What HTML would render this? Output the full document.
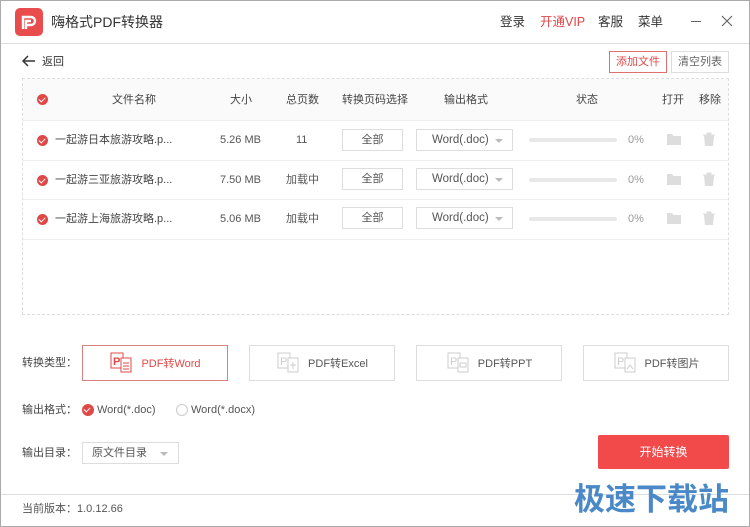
<!DOCTYPE html>
<html><head><meta charset="utf-8"><style>
*{margin:0;padding:0;box-sizing:border-box}
body{width:750px;height:527px;background:#fff;font-family:"Liberation Sans","Noto Sans CJK SC",sans-serif;color:#333;position:relative;overflow:hidden;font-size:12px}
.a{position:absolute}
.win{left:0;top:0;width:750px;height:527px;border:1px solid #aaa}
.hl{height:1px;background:#ddd;left:1px;width:748px}
.chk{width:11px;height:11px;border-radius:50%;background:#e04848}
.chk:after{content:"";position:absolute;left:3px;top:2px;width:3px;height:5px;border:solid #fff;border-width:0 1.5px 1.5px 0;transform:rotate(45deg)}
.t{font-size:11px;color:#444;line-height:14px}
.box{border:1px solid #ddd;background:#fff}
.bar{height:4px;background:#e8e8e8;border-radius:2px}
.ct{border:1px solid #ddd;height:36px;width:146px;top:345px;font-size:11px;color:#555;display:flex;align-items:center;justify-content:center;gap:8px}
</style></head><body>
<div class="a win"></div>
<svg class="a" style="left:15px;top:8px" width="28" height="28" viewBox="0 0 28 28"><rect width="28" height="28" rx="5" fill="#e94c4c"/><path d="M8 21V9h8a4 4 0 0 1 0 8h-5M11 21v-8h5" stroke="#fff" stroke-width="2.4" fill="none"/></svg>
<div class="a" style="left:51px;top:13px;font-size:14px;color:#333;line-height:18px">嗨格式PDF转换器</div>
<div class="a" style="left:500px;top:14px;font-size:12.5px;color:#333;line-height:16px">登录</div>
<div class="a" style="left:540px;top:14px;font-size:12.5px;color:#e04848;line-height:16px">开通VIP</div>
<div class="a" style="left:598px;top:14px;font-size:12.5px;color:#333;line-height:16px">客服</div>
<div class="a" style="left:638px;top:14px;font-size:12.5px;color:#333;line-height:16px">菜单</div>
<div class="a" style="left:691px;top:21px;width:10px;height:1px;background:#666"></div>
<svg class="a" style="left:721px;top:15px" width="12" height="12"><path d="M1 1L11 11M11 1L1 11" stroke="#666" stroke-width="1.2"/></svg>
<div class="a hl" style="top:43px"></div>
<svg class="a" style="left:22px;top:55px" width="14" height="12"><path d="M13 6H2M6 1L1 6l5 5" stroke="#333" stroke-width="1.5" fill="none"/></svg>
<div class="a t" style="left:42px;top:55px;color:#333">返回</div>
<div class="a" style="left:609px;top:51px;width:58px;height:22px;border:1px solid #e07070;color:#e04848;font-size:11px;text-align:center;line-height:20px">添加文件</div>
<div class="a" style="left:671px;top:51px;width:58px;height:22px;border:1px solid #ddd;color:#666;font-size:11px;text-align:center;line-height:20px">清空列表</div>
<div class="a" style="left:22px;top:78px;width:707px;height:237px;border:1px dashed #ddd"></div>
<div class="a" style="left:23px;top:79px;width:705px;height:41px;background:#fafafa"></div>
<div class="a chk" style="left:37px;top:94px"></div>
<div class="a t" style="left:112px;top:93px">文件名称</div>
<div class="a t" style="left:230px;top:93px">大小</div>
<div class="a t" style="left:286px;top:93px">总页数</div>
<div class="a t" style="left:342px;top:93px">转换页码选择</div>
<div class="a t" style="left:444px;top:93px">输出格式</div>
<div class="a t" style="left:576px;top:93px">状态</div>
<div class="a t" style="left:662px;top:93px">打开</div>
<div class="a t" style="left:699px;top:93px">移除</div>
<div class="a hl" style="left:23px;width:705px;top:120px;background:#eee"></div>
<div class="a hl" style="left:23px;width:705px;top:160px;background:#eee"></div>
<div class="a hl" style="left:23px;width:705px;top:199px;background:#eee"></div>
<div class="a hl" style="left:23px;width:705px;top:239px;background:#eee"></div>

<div class="a chk" style="left:37px;top:135px"></div><div class="a t" style="left:55px;top:133px">一起游日本旅游攻略.p...</div><div class="a t" style="left:220px;top:133px;color:#555">5.26 MB</div><div class="a t" style="left:296px;top:133px;color:#555">11</div>
<div class="a chk" style="left:37px;top:175px"></div><div class="a t" style="left:55px;top:173px">一起游三亚旅游攻略.p...</div><div class="a t" style="left:220px;top:173px;color:#555">7.50 MB</div><div class="a t" style="left:286px;top:173px;color:#555">加载中</div>
<div class="a chk" style="left:37px;top:214px"></div><div class="a t" style="left:55px;top:212px">一起游上海旅游攻略.p...</div><div class="a t" style="left:220px;top:212px;color:#555">5.06 MB</div><div class="a t" style="left:286px;top:212px;color:#555">加载中</div>

<div class="a box" style="left:342px;top:129px;width:61px;height:22px;font-size:11px;text-align:center;line-height:20px;color:#555">全部</div>
<div class="a box" style="left:342px;top:168px;width:61px;height:22px;font-size:11px;text-align:center;line-height:20px;color:#555">全部</div>
<div class="a box" style="left:342px;top:207px;width:61px;height:22px;font-size:11px;text-align:center;line-height:20px;color:#555">全部</div>
<div class="a box" style="left:416px;top:129px;width:97px;height:22px;font-size:11.5px;line-height:20px;padding-left:15px;color:#555">Word(.doc)<span class="a" style="right:9px;top:9px;border:4px solid transparent;border-top-color:#bbb"></span></div>
<div class="a box" style="left:416px;top:168px;width:97px;height:22px;font-size:11.5px;line-height:20px;padding-left:15px;color:#555">Word(.doc)<span class="a" style="right:9px;top:9px;border:4px solid transparent;border-top-color:#bbb"></span></div>
<div class="a box" style="left:416px;top:207px;width:97px;height:22px;font-size:11.5px;line-height:20px;padding-left:15px;color:#555">Word(.doc)<span class="a" style="right:9px;top:9px;border:4px solid transparent;border-top-color:#bbb"></span></div>
<div class="a bar" style="left:529px;top:138px;width:88px"></div><div class="a bar" style="left:529px;top:178px;width:88px"></div><div class="a bar" style="left:529px;top:217px;width:88px"></div>
<div class="a t" style="left:628px;top:133px;color:#999">0%</div><div class="a t" style="left:628px;top:173px;color:#999">0%</div><div class="a t" style="left:628px;top:212px;color:#999">0%</div>
<svg class="a" style="left:667px;top:133px" width="14" height="12"><path d="M0 1h5l1.5 2H14v9H0z" fill="#ddd"/></svg>
<svg class="a" style="left:667px;top:173px" width="14" height="12"><path d="M0 1h5l1.5 2H14v9H0z" fill="#ddd"/></svg>
<svg class="a" style="left:667px;top:212px" width="14" height="12"><path d="M0 1h5l1.5 2H14v9H0z" fill="#ddd"/></svg>
<svg class="a" style="left:703px;top:132px" width="12" height="14"><path d="M0 3h12M4 3V1h4v2M1.5 4h9l-1 10h-7z" fill="#ddd" stroke="#ddd"/></svg>
<svg class="a" style="left:703px;top:172px" width="12" height="14"><path d="M0 3h12M4 3V1h4v2M1.5 4h9l-1 10h-7z" fill="#ddd" stroke="#ddd"/></svg>
<svg class="a" style="left:703px;top:211px" width="12" height="14"><path d="M0 3h12M4 3V1h4v2M1.5 4h9l-1 10h-7z" fill="#ddd" stroke="#ddd"/></svg>

<div class="a t" style="left:22px;top:356px">转换类型：</div>
<div class="a ct" style="left:82px;border-color:#d98080;color:#e04848"><svg width="24" height="24"><rect x="2" y="2" width="12" height="15" fill="#fff" stroke="#e04848"/><text x="4" y="14" font-size="11" font-weight="bold" fill="#e04848" font-family="Liberation Sans">P</text><rect x="12" y="7" width="10" height="14" fill="#fff" stroke="#e04848"/><path d="M14 12h6M14 15h6M14 18h6" stroke="#e04848"/></svg>PDF转Word</div>
<div class="a ct" style="left:249px"><svg width="24" height="24"><rect x="2" y="2" width="12" height="15" fill="#fff" stroke="#ccc"/><text x="4" y="14" font-size="11" fill="#ccc" font-family="Liberation Sans">P</text><rect x="12" y="7" width="10" height="14" fill="#fff" stroke="#ccc"/><path d="M14 14h6M17 11v7" stroke="#ccc"/></svg>PDF转Excel</div>
<div class="a ct" style="left:416px"><svg width="24" height="24"><rect x="2" y="2" width="12" height="15" fill="#fff" stroke="#ccc"/><text x="4" y="14" font-size="11" fill="#ccc" font-family="Liberation Sans">P</text><rect x="12" y="7" width="10" height="14" fill="#fff" stroke="#ccc"/><rect x="14" y="12" width="6" height="4" fill="none" stroke="#ccc"/></svg>PDF转PPT</div>
<div class="a ct" style="left:583px"><svg width="24" height="24"><rect x="2" y="2" width="12" height="15" fill="#fff" stroke="#ccc"/><text x="4" y="14" font-size="11" fill="#ccc" font-family="Liberation Sans">P</text><rect x="12" y="7" width="10" height="14" fill="#fff" stroke="#ccc"/><path d="M14 18l3-4 3 4" stroke="#ccc" fill="none"/></svg>PDF转图片</div>

<div class="a t" style="left:22px;top:403px">输出格式：</div>
<div class="a chk" style="left:82px;top:404px;width:12px;height:12px"></div>
<div class="a t" style="left:97px;top:403px;color:#555">Word(*.doc)</div>
<div class="a" style="left:176px;top:404px;width:12px;height:12px;border:1px solid #ccc;border-radius:50%"></div>
<div class="a t" style="left:191px;top:403px;color:#555">Word(*.docx)</div>

<div class="a t" style="left:22px;top:446px">输出目录：</div>
<div class="a box" style="left:82px;top:442px;width:97px;height:22px;font-size:11px;line-height:20px;padding-left:9px;color:#555">原文件目录<span class="a" style="right:10px;top:9px;border:4px solid transparent;border-top-color:#bbb"></span></div>

<div class="a" style="left:598px;top:435px;width:131px;height:34px;background:#f24a4a;border-radius:2px;color:#fff;font-size:12px;text-align:center;line-height:34px">开始转换</div>
<div class="a hl" style="top:494px"></div>
<div class="a t" style="left:22px;top:502px;color:#555">当前版本：1.0.12.66</div>
<div class="a" style="left:574px;top:476px;font-size:31px;font-weight:bold;color:#4a88c8;line-height:42px;font-family:'Noto Sans CJK SC',sans-serif">极速下载站</div>
</body></html>
